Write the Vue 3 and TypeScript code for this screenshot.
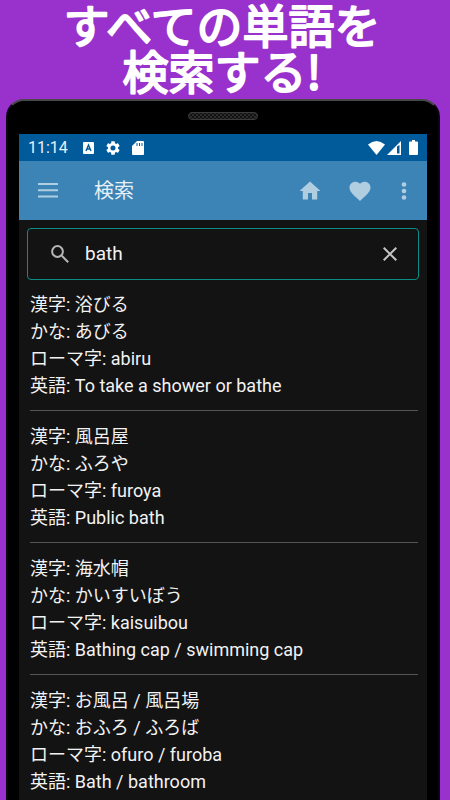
<script setup lang="ts">
import { ref } from 'vue'

interface Entry {
  kanji: string
  kana: string
  romaji: string
  english: string
}

const query = ref<string>('bath')

const entries: Entry[] = [
  { kanji: '浴びる', kana: 'あびる', romaji: 'abiru', english: 'To take a shower or bathe' },
  { kanji: '風呂屋', kana: 'ふろや', romaji: 'furoya', english: 'Public bath' },
  { kanji: '海水帽', kana: 'かいすいぼう', romaji: 'kaisuibou', english: 'Bathing cap / swimming cap' },
  { kanji: 'お風呂 / 風呂場', kana: 'おふろ / ふろば', romaji: 'ofuro / furoba', english: 'Bath / bathroom' },
]
</script>

<template>
  <main class="promo">
    <h1 class="headline">
      <svg class="headline-art" viewBox="0 0 434 99">
        <text x="216" y="43">すべての単語を</text>
        <text x="216" y="89">検索する!</text>
      </svg>
    </h1>

    <section class="phone">
      <div class="bezel">
        <svg class="speaker" viewBox="0 0 70 8" aria-hidden="true">
          <defs>
            <pattern id="mesh" width="4" height="4" patternUnits="userSpaceOnUse">
              <rect width="4" height="4" fill="#2b2b2b" />
              <circle cx="1" cy="1" r="0.9" fill="#050505" />
              <circle cx="3" cy="3" r="0.9" fill="#050505" />
            </pattern>
          </defs>
          <rect x="0.5" y="0.5" width="69" height="7" rx="3.5" fill="url(#mesh)" stroke="#3c3c3c" />
        </svg>
      </div>

      <div class="screen">
        <div class="status">
          <span class="clock">11:14</span>
          <svg class="status-a" viewBox="0 0 11 12" aria-hidden="true">
            <rect width="11" height="12" rx="1" fill="#fff" />
            <path d="M3 9 5.500 3 8 9M3.900 7h3.200" fill="none" stroke="#015b9a" stroke-width="1.400" />
          </svg>
          <svg class="status-gear" viewBox="2 2 20 20" aria-hidden="true">
            <path fill="#fff" d="M19.140 12.940c.04-.3.060-.61.060-.94 0-.32-.02-.64-.07-.94l2.030-1.580c.18-.14.230-.41.120-.61l-1.920-3.320c-.12-.22-.37-.29-.59-.22l-2.390.96c-.5-.38-1.030-.7-1.620-.94l-.36-2.540c-.04-.24-.24-.41-.48-.41h-3.840c-.24 0-.43.17-.47.41l-.36 2.540c-.59.24-1.130.57-1.620.94l-2.390-.96c-.22-.08-.47 0-.59.22L2.740 8.870c-.12.21-.08.47.120.61l2.030 1.580c-.05.3-.09.63-.09.94s.02.64.070.94l-2.030 1.580c-.18.14-.23.41-.12.61l1.920 3.320c.12.22.370.290.590.220l2.390-.96c.5.380 1.030.7 1.620.94l.36 2.540c.05.240.240.410.480.410h3.840c.24 0 .44-.17.470-.41l.36-2.540c.59-.24 1.130-.56 1.620-.94l2.390.96c.22.080.470 0 .59-.22l1.920-3.320c.12-.22.070-.47-.12-.61zM12 15.600a3.600 3.600 0 1 1 0-7.200 3.600 3.600 0 0 1 0 7.200z" />
          </svg>
          <svg class="status-sd" viewBox="0 0 12 14" aria-hidden="true">
            <path d="M5 0h6q1 0 1 1v12q0 1-1 1H1q-1 0-1-1V5z" fill="#fff" />
            <path d="M5 2v3M7.500 2v3M10 2v3" stroke="#015b9a" stroke-width="1" />
          </svg>
          <span class="grow"></span>
          <svg class="status-wifi" viewBox="0 0 17 14" aria-hidden="true">
            <path d="M0 3.500Q8.500-3.500 17 3.500L8.500 14z" fill="#fff" />
          </svg>
          <svg class="status-cell" viewBox="0 0 14 14" aria-hidden="true">
            <path d="M0 14 14 0v14z" fill="#fff" />
            <path d="M10 5.500 12.500 4v8.500H10z" fill="#015b9a" />
          </svg>
          <svg class="status-battery" viewBox="0 0 9 15" aria-hidden="true">
            <path d="M3 0h3v1.500h2q1 0 1 1V14q0 1-1 1H1q-1 0-1-1V2.500q0-1 1-1h2z" fill="#fff" />
          </svg>
        </div>

        <header class="appbar">
          <button type="button" class="icon-btn" aria-label="Menu">
            <svg viewBox="0 0 24 24"><path d="M2 4h20v2H2zM2 10.300h20v2H2zM2 16.600h20v2H2z" /></svg>
          </button>
          <h2 class="title">検索</h2>
          <button type="button" class="icon-btn" aria-label="Home">
            <svg viewBox="0 0 24 24"><path d="M10 20.500v-6.500h4v6.500h5.200v-8.500H22.500L12 2.500 1.500 12h3.300v8.500z" /></svg>
          </button>
          <button type="button" class="icon-btn heart" aria-label="Favourites">
            <svg viewBox="0 0 24 24"><path d="m12 21.900-1.500-1.400C5.200 15.600 1.500 12.500 1.500 8.400 1.500 5.200 4.100 2.700 7.300 2.700c1.800 0 3.600.8 4.700 2.100 1.100-1.300 2.900-2.100 4.700-2.100 3.200 0 5.800 2.500 5.800 5.700 0 4.100-3.700 7.200-9 12.100z" /></svg>
          </button>
          <button type="button" class="icon-btn more" aria-label="More">
            <svg viewBox="0 0 24 24"><circle cx="12" cy="5.500" r="2.300" /><circle cx="12" cy="12" r="2.300" /><circle cx="12" cy="18.500" r="2.300" /></svg>
          </button>
        </header>

        <form class="search" role="search" @submit.prevent>
          <svg class="glass" viewBox="0 0 18 18" aria-hidden="true">
            <circle cx="6.500" cy="6.500" r="5.400" />
            <path d="m10.800 10.800 6.400 6.400" />
          </svg>
          <input v-model="query" class="field" type="text" aria-label="検索" />
          <button type="button" class="clear" aria-label="Clear" @click="query = ''">
            <svg viewBox="0 0 14 14"><path d="m.7.7 12.600 12.600M13.300.7.7 13.300" /></svg>
          </button>
        </form>

        <ul class="results">
          <li v-for="entry in entries" :key="entry.romaji" class="entry">
            <p>漢字: {{ entry.kanji }}</p>
            <p>かな: {{ entry.kana }}</p>
            <p>ローマ字: {{ entry.romaji }}</p>
            <p>英語: {{ entry.english }}</p>
          </li>
        </ul>
      </div>
    </section>
  </main>
</template>

<style>
body {
  margin: 0;
  background: #9932cc;
}
</style>

<style scoped>
.promo {
  box-sizing: border-box;
  height: 100vh;
  display: flex;
  flex-direction: column;
  overflow: hidden;
  padding: 0 10px 0 6px;
  background: #9932cc;
  font-family: Roboto, "Noto Sans CJK JP", sans-serif;
}

.headline {
  flex: none;
  margin: 0;
  height: 99px;
}

.headline-art {
  display: block;
  width: 100%;
  height: 100%;
  fill: #fff;
  stroke: #fff;
  stroke-width: 2;
  stroke-linejoin: round;
  font-family: "Noto Sans CJK JP", sans-serif;
  font-size: 46px;
  font-weight: 400;
  text-anchor: middle;
}

.phone {
  flex: 1;
  min-height: 0;
  display: flex;
  flex-direction: column;
  box-sizing: border-box;
  padding: 0 11px;
  border: 2px solid #0c0612;
  border-top-color: #484848;
  border-bottom: 0;
  border-radius: 18px 18px 0 0;
  background: #000;
}

.bezel {
  flex: none;
  height: 33px;
  display: flex;
  justify-content: center;
  align-items: center;
  box-sizing: border-box;
  padding-bottom: 3px;
}

.speaker {
  width: 70px;
  height: 8px;
}

.screen {
  flex: 1;
  min-height: 0;
  overflow: hidden;
  background: #131313;
  color: #f2f2f2;
}

.status {
  display: flex;
  align-items: center;
  height: 27px;
  padding: 0 9px;
  background: #015b9a;
}

.clock {
  margin-right: 15px;
  font-size: 16px;
  line-height: 27px;
  color: #e6f0f8;
}

.grow {
  flex: 1;
}

.status-a { width: 11px; height: 12px; margin-right: 12px; }
.status-gear { width: 14px; height: 14px; margin-right: 12px; }
.status-sd { width: 12px; height: 14px; }
.status-wifi { width: 17px; height: 14px; margin-right: 2px; }
.status-cell { width: 14px; height: 14px; margin-right: 8px; }
.status-battery { width: 9px; height: 15px; }

.appbar {
  display: flex;
  align-items: center;
  height: 59px;
  box-sizing: border-box;
  padding: 0 11px 0 17px;
  background: #3c84b5;
}

.icon-btn {
  display: flex;
  padding: 0;
  border: 0;
  background: none;
  cursor: pointer;
}

.icon-btn svg {
  width: 24px;
  height: 24px;
  fill: #b1cee1;
}

.heart {
  margin-left: 26px;
}

.more {
  margin-left: 20px;
}

.title {
  flex: 1;
  margin: 0 0 0 34px;
  color: #e6f0f7;
  font-size: 20px;
  font-weight: 400;
  line-height: 28px;
}

.search {
  display: flex;
  align-items: center;
  box-sizing: border-box;
  height: 52px;
  margin: 8px 8px 0;
  padding: 0 21px 0 23px;
  border: 1px solid #0b8d86;
  border-radius: 4px;
}

.glass {
  flex: none;
  width: 18px;
  height: 18px;
  fill: none;
  stroke: #b5b5b5;
  stroke-width: 2;
}

.field {
  flex: 1;
  min-width: 0;
  margin-left: 16px;
  padding: 0;
  border: 0;
  outline: 0;
  background: none;
  color: #f2f2f2;
  font-family: inherit;
  font-size: 19px;
  line-height: 28px;
}

.clear {
  display: flex;
  padding: 0;
  border: 0;
  background: none;
  cursor: pointer;
}

.clear svg {
  width: 14px;
  height: 14px;
  fill: none;
  stroke: #c4c4c4;
  stroke-width: 2;
}

.results {
  margin: 0;
  padding: 11px 9px 0 11px;
  list-style: none;
}

.entry {
  padding-bottom: 11px;
  font-size: 18px;
}

.entry + .entry {
  padding-top: 12px;
  border-top: 1px solid #555;
}

.entry p {
  margin: 0;
  line-height: 27px;
  white-space: nowrap;
}
</style>
